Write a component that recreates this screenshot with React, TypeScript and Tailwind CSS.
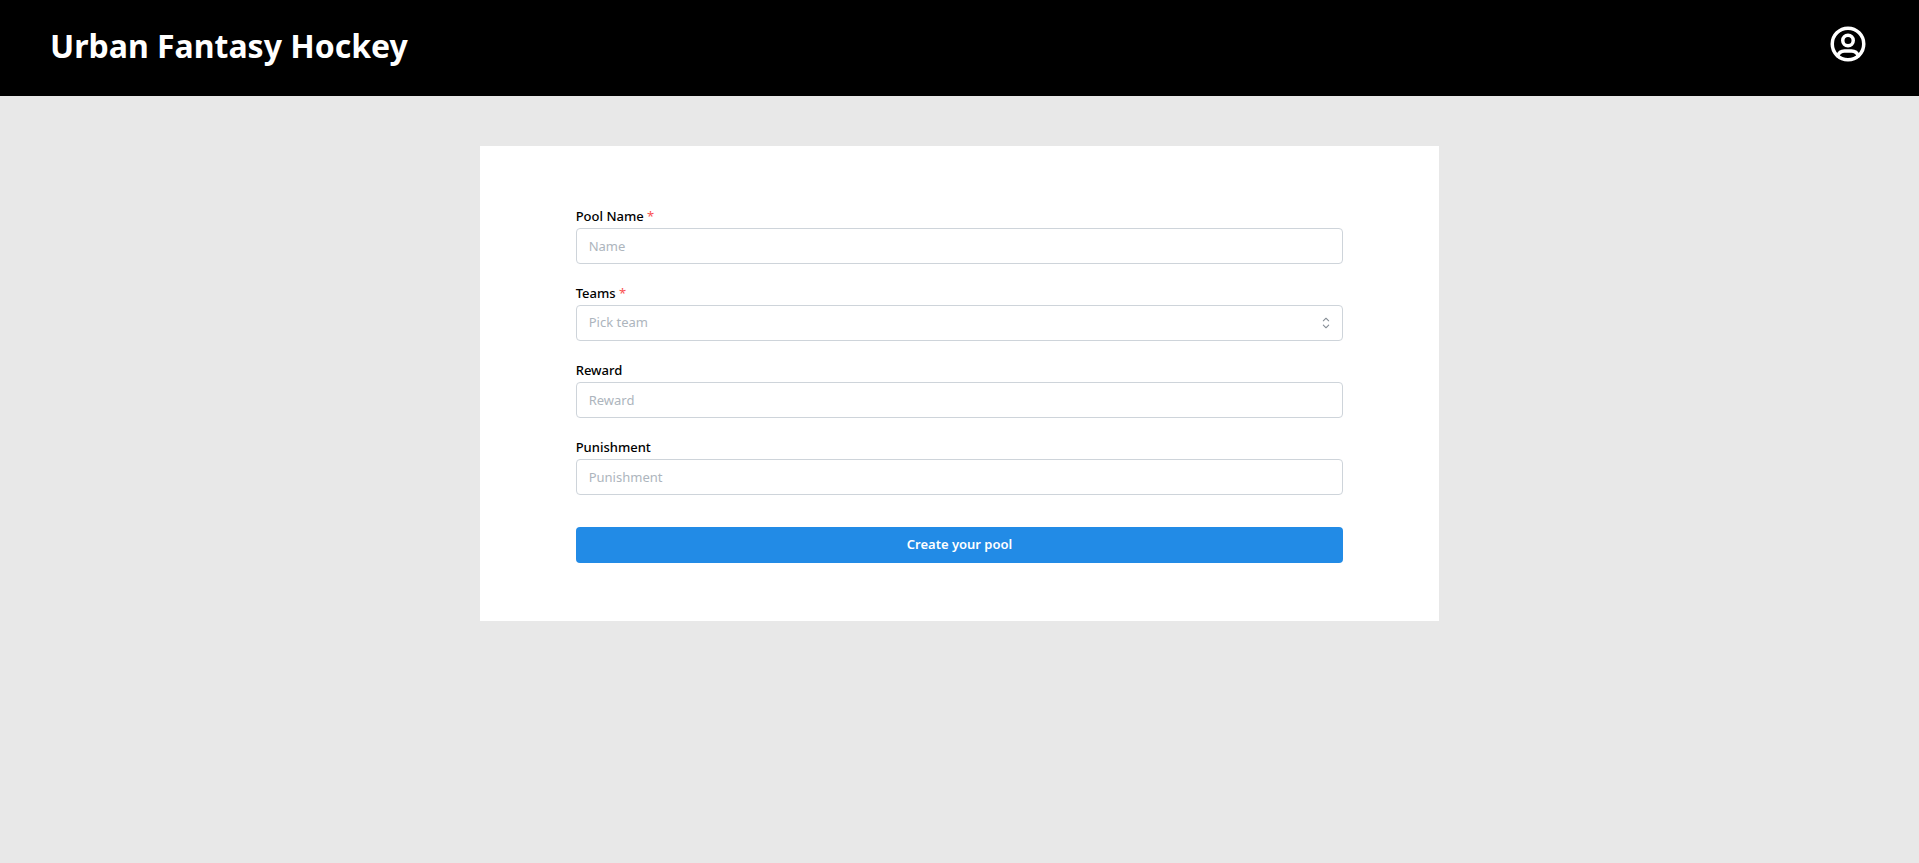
import type { InputHTMLAttributes, ReactNode } from "react";
import { TbUserCircle } from "react-icons/tb";

const controlClass =
  "block h-9 w-full rounded border border-[#ced4da] bg-white px-3 text-[13px] text-black outline-none placeholder:text-[#adb5bd] focus:border-[#228be6]";

type FieldProps = {
  id: string;
  label: string;
  required?: boolean;
  children: ReactNode;
};

function Field({ id, label, required, children }: FieldProps) {
  return (
    <div>
      <label htmlFor={id} className="mb-[3px] block text-[13px] leading-[18px] font-medium text-black">
        {label}
        {required && <span className="font-normal text-[#fa5252]"> *</span>}
      </label>
      {children}
    </div>
  );
}

function TextInput(props: InputHTMLAttributes<HTMLInputElement>) {
  return <input type="text" className={controlClass} {...props} />;
}

function SelectorIcon() {
  return (
    <svg
      viewBox="0 0 15 15"
      fill="#868e96"
      aria-hidden="true"
      className="pointer-events-none col-start-1 row-start-1 mr-2 size-[18px] self-center justify-self-end"
    >
      <path
        fillRule="evenodd"
        clipRule="evenodd"
        d="M4.93179 5.43179C4.75605 5.60753 4.75605 5.89245 4.93179 6.06819C5.10753 6.24392 5.39245 6.24392 5.56819 6.06819L7.49999 4.13638L9.43179 6.06819C9.60753 6.24392 9.89245 6.24392 10.0682 6.06819C10.2439 5.89245 10.2439 5.60753 10.0682 5.43179L7.81819 3.18179C7.73379 3.0974 7.61933 3.04999 7.49999 3.04999C7.38064 3.04999 7.26618 3.0974 7.18179 3.18179L4.93179 5.43179ZM10.0682 9.56819C10.2439 9.39245 10.2439 9.10753 10.0682 8.93179C9.89245 8.75606 9.60753 8.75606 9.43179 8.93179L7.49999 10.8636L5.56819 8.93179C5.39245 8.75606 5.10753 8.75606 4.93179 8.93179C4.75605 9.10753 4.75605 9.39245 4.93179 9.56819L7.18179 11.8182C7.35753 11.9939 7.64245 11.9939 7.81819 11.8182L10.0682 9.56819Z"
      />
    </svg>
  );
}

export default function App() {
  return (
    <div className="min-h-screen bg-[#e8e8e8] font-['Noto_Sans','Open_Sans',sans-serif]">
      <header className="flex h-24 items-start justify-between bg-black px-[50px] text-white">
        <h1 className="pt-6 text-[32px] leading-[44px] font-bold">Urban Fantasy Hockey</h1>
        <button type="button" aria-label="Account" className="mt-[23px]">
          <TbUserCircle size={42} />
        </button>
      </header>
      <main className="pt-[50px]">
        <form
          className="mx-auto w-1/2 bg-white px-[5%] pt-[61px] pb-[58px]"
          onSubmit={(event) => event.preventDefault()}
        >
          <div className="flex flex-col gap-5">
            <Field id="pool-name" label="Pool Name" required>
              <TextInput id="pool-name" placeholder="Name" />
            </Field>
            <Field id="teams" label="Teams" required>
              <div className="grid">
                <select
                  id="teams"
                  defaultValue=""
                  className="col-start-1 row-start-1 block h-9 w-full appearance-none rounded border border-[#ced4da] bg-white px-3 text-[13px] text-[#adb5bd] outline-none focus:border-[#228be6]"
                >
                  <option value="">Pick team</option>
                </select>
                <SelectorIcon />
              </div>
            </Field>
            <Field id="reward" label="Reward">
              <TextInput id="reward" placeholder="Reward" />
            </Field>
            <Field id="punishment" label="Punishment">
              <TextInput id="punishment" placeholder="Punishment" />
            </Field>
          </div>
          <button
            type="submit"
            className="mt-8 h-9 w-full rounded bg-[#228be6] text-[13px] font-semibold text-white"
          >
            Create your pool
          </button>
        </form>
      </main>
    </div>
  );
}
